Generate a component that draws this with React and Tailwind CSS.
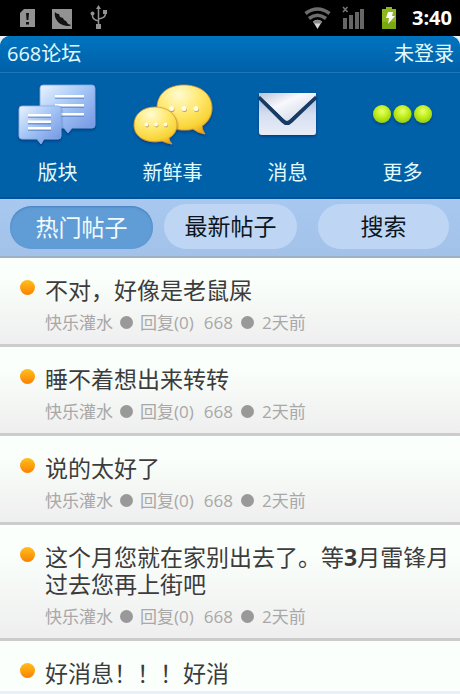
import React from "react";

const posts = [
  { title: "不对，好像是老鼠屎", board: "快乐灌水", replies: 0, author: "668", age: "2天前" },
  { title: "睡不着想出来转转", board: "快乐灌水", replies: 0, author: "668", age: "2天前" },
  { title: "说的太好了", board: "快乐灌水", replies: 0, author: "668", age: "2天前" },
  {
    title: <>这个月您就在家别出去了。等<b>3</b>月雷锋月过去您再上街吧</>,
    board: "快乐灌水",
    replies: 0,
    author: "668",
    age: "2天前",
  },
  { title: "好消息！！！好消" },
];

function StatusBar() {
  return (
    <div className="flex h-9 shrink-0 items-center bg-black pr-2 pl-5">
      <svg width="92" height="36" viewBox="0 0 92 36" fill="#929292" aria-hidden="true">
        <path d="M0 13 4 9H15V27H0Z" />
        <path d="M6 13h3l-.6 7H6.6zM6 22h3v2.500H6z" fill="#111" />
        <path d="M32 9H52V29H32Z" />
        <path d="M35 12c1 1 2 2 4 2l1 3 3 1 1 2 2 1 2 3 3 1c-1 2-8 1-12-2-3-3-5-7-4-11z" fill="#111" />
        <g stroke="#929292" strokeWidth="1.500" fill="none">
          <path d="M78.500 8v17M78.500 21c-4-1-6-2-6-5v-2M78.500 19c5-1 7-2 7-6" />
        </g>
        <path d="M78.500 5l2.500 4h-5zM76 24h5v5h-5zM83 10h4v4h-4z" />
        <circle cx="72.500" cy="13.500" r="2" />
      </svg>
      <svg className="ml-auto" width="98" height="36" viewBox="0 0 98 36" aria-hidden="true">
        <g fill="none" stroke="#6d6d6d" strokeWidth="3.500">
          <path d="M3.500 13.500Q15.500 4.500 27.500 13.500" />
          <path d="M7 18.500Q15.500 12 24 18.500" />
        </g>
        <path d="M11 21.500Q15.500 18 20 21.500L15.500 29Z" fill="#d8d8d8" />
        <path d="M11 21.500Q15.500 18 20 21.500L19 23.500H12Z" fill="#888" />
        <path d="M41 18h4v11h-4zM47 15h4v14h-4zM53 12h4v17h-4zM58 9h4v20h-4z" fill="#666" />
        <path d="M41 7l4.500 5M45.500 7l-4.500 5" stroke="#777" strokeWidth="1.500" />
        <path d="M84 7h6v2h4v20H80V9h4z" fill="#8db81d" />
        <path d="M80 22h14v7H80z" fill="#7aa80f" />
        <path d="M86 12h5l-1 4h3l-7 8 1-6h-3z" fill="#fff" />
      </svg>
      <time className="w-[52px] text-right text-[20px] leading-9 font-bold text-white">3:40</time>
    </div>
  );
}

function Lines({ x, y, w, gap }) {
  return [0, 1, 2].map((i) => (
    <g key={i}>
      <rect x={x} y={y + i * gap + 1} width={w} height="3" fill="#4f79bd" opacity=".6" />
      <rect x={x} y={y + i * gap} width={w} height="2.500" fill="#fff" />
    </g>
  ));
}

function BoardsIcon() {
  return (
    <svg width="86" height="66" viewBox="0 0 86 66" aria-hidden="true">
      <defs>
        <linearGradient id="board" x1="0" y1="0" x2="1" y2="1">
          <stop offset="0" stopColor="#ebf4ff" />
          <stop offset=".45" stopColor="#a5c6f5" />
          <stop offset="1" stopColor="#6f92e2" />
        </linearGradient>
        <filter id="soft" x="-20%" y="-20%" width="140%" height="150%">
          <feDropShadow dx="0" dy="1.500" stdDeviation="1" floodColor="#002a68" floodOpacity=".65" />
        </filter>
      </defs>
      <g filter="url(#soft)">
        <path d="M28 4H77Q80 4 80 7V44Q80 47 77 47H57L53 52 49 47H28Q25 47 25 44V7Q25 4 28 4Z" fill="url(#board)" stroke="#7da5e6" strokeWidth=".8" />
        <Lines x={40} y={14} w={29} gap={9} />
      </g>
      <g filter="url(#soft)">
        <path d="M7 25H43Q46 25 46 28V55Q46 58 43 58H29L26 63 22 58H7Q4 58 4 55V28Q4 25 7 25Z" fill="url(#board)" stroke="#8aaeea" strokeWidth=".8" />
        <Lines x={13} y={33} w={23} gap={6.5} />
      </g>
    </svg>
  );
}

function NewsIcon() {
  return (
    <svg width="86" height="66" viewBox="0 0 86 66" aria-hidden="true">
      <defs>
        <radialGradient id="bubble" cx=".4" cy=".2" r=".85">
          <stop offset="0" stopColor="#fffbd0" />
          <stop offset=".5" stopColor="#ffe667" />
          <stop offset=".8" stopColor="#f9d437" />
          <stop offset="1" stopColor="#eda71b" />
        </radialGradient>
      </defs>
      <g filter="url(#soft)">
        <path d="M54 4C70 4 82 13 82 27C82 35 78 41 72 45Q72 49 75 53Q68 52 63 48C60 49 57 49 54 49C38 49 27 40 27 27C27 13 38 4 54 4Z" fill="url(#bubble)" stroke="#d99925" strokeWidth=".8" />
        <g fill="#c9a04a"><circle cx="42" cy="28.500" r="2.500" /><circle cx="54.500" cy="28.500" r="2.500" /><circle cx="66.500" cy="28.500" r="2.500" /></g>
        <g fill="#fffdec"><circle cx="41.500" cy="27.500" r="2.500" /><circle cx="54" cy="27.500" r="2.500" /><circle cx="66" cy="27.500" r="2.500" /></g>
      </g>
      <g filter="url(#soft)">
        <path d="M25 26C37 26 47 33 47 44C47 50 43 55 39 57Q39 60 42 63Q36 62 32 60C18 63 4 57 4 44C4 33 13 26 25 26Z" fill="url(#bubble)" stroke="#d99925" strokeWidth=".8" />
        <g fill="#c9a04a"><circle cx="17" cy="44.500" r="2" /><circle cx="26.500" cy="44.500" r="2" /><circle cx="36" cy="44.500" r="2" /></g>
        <g fill="#fffdec"><circle cx="16.500" cy="43.500" r="2" /><circle cx="26" cy="43.500" r="2" /><circle cx="35.500" cy="43.500" r="2" /></g>
      </g>
    </svg>
  );
}

function MailIcon() {
  return (
    <svg width="86" height="66" viewBox="0 0 86 66" aria-hidden="true">
      <defs>
        <linearGradient id="mail" x1="0" y1="0" x2="0" y2="1">
          <stop offset="0" stopColor="#9fb3d3" />
          <stop offset=".5" stopColor="#d5def0" />
          <stop offset="1" stopColor="#e9edf6" />
        </linearGradient>
        <linearGradient id="flap" x1="0" y1="0" x2="1" y2="1">
          <stop offset="0" stopColor="#b9c3d8" />
          <stop offset=".4" stopColor="#f8f8fd" />
          <stop offset="1" stopColor="#c9d1e2" />
        </linearGradient>
      </defs>
      <g filter="url(#soft)">
        <path d="M14 12H71V51Q71 54 68 54H17Q14 54 14 51Z" fill="url(#mail)" />
      </g>
      <path d="M14 16L38 40Q42 44 46 40L71 16" fill="none" stroke="#173b64" strokeWidth="4" />
      <path d="M14 12H71V14L46 37Q42 41 38 37L14 14Z" fill="url(#flap)" />
    </svg>
  );
}

function MoreIcon() {
  return (
    <svg width="86" height="66" viewBox="0 0 86 66" aria-hidden="true">
      <defs>
        <radialGradient id="lime" cx=".5" cy=".35" r=".65">
          <stop offset="0" stopColor="#e9ff78" />
          <stop offset=".5" stopColor="#c2ef1c" />
          <stop offset="1" stopColor="#93cf0d" />
        </radialGradient>
      </defs>
      <g fill="url(#lime)" filter="url(#soft)">
        <circle cx="22" cy="33" r="9" /><circle cx="42.500" cy="33" r="9" /><circle cx="63" cy="33" r="9" />
      </g>
    </svg>
  );
}

const menu = [
  { label: "版块", Icon: BoardsIcon },
  { label: "新鲜事", Icon: NewsIcon },
  { label: "消息", Icon: MailIcon },
  { label: "更多", Icon: MoreIcon },
];

function Post({ title, board, replies, author, age }) {
  return (
    <li className="flex shrink-0 border-b-3 border-[#cbcccb] bg-linear-to-b from-[#fafffb] from-25% to-[#eeeeee] pt-[19px] pr-2 pb-[11px] pl-5 last:grow last:border-b-0 last:bg-[#fafffb] last:bg-none last:pb-0">
      <span className="mt-[3px] mr-[10px] size-[15px] shrink-0 rounded-full bg-linear-to-b from-[#ffc01c] to-[#f98000]" />
      <div className="min-w-0">
        <h2 className="text-[23px] leading-[27px] text-[#3c3c3c]">{title}</h2>
        {board && (
          <p className="mt-2 flex items-center text-[17px] leading-[21px] text-[#a8a8a8]">
            {board}
            <i className="mx-[7px] size-[13px] rounded-full bg-[#999]" />
            回复({replies})
            <span className="ml-[10px]">{author}</span>
            <i className="mx-2 size-[13px] rounded-full bg-[#999]" />
            {age}
          </p>
        )}
      </div>
    </li>
  );
}

export default function App() {
  return (
    <div className="flex h-screen flex-col overflow-hidden bg-[#e8f0f8] font-['Open_Sans','Noto_Sans_CJK_SC',sans-serif]">
      <StatusBar />
      <header className="shrink-0 overflow-hidden rounded-t-[10px] border-b-2 border-[#00529a] bg-[#0060a8] text-[#e2fbff]">
        <div className="flex h-[37px] items-center justify-between border-b border-[#1b78bb] bg-linear-to-b from-[#0074bf] to-[#0060a8] pr-[6px] pl-[7px]">
          <h1 className="text-[20px] leading-9">668论坛</h1>
          <a href="#login" className="text-[20px] leading-9">未登录</a>
        </div>
        <nav className="grid h-[124px] grid-cols-4 pt-2">
          {menu.map(({ label, Icon }) => (
            <a key={label} href="#menu" className="flex flex-col items-center">
              <Icon />
              <span className="mt-[13px] text-[20px] leading-[26px]">{label}</span>
            </a>
          ))}
        </nav>
      </header>
      <div className="flex h-[59px] shrink-0 items-start border-b-2 border-[#9fb1c4] bg-linear-to-b from-[#a9c8f0] to-[#a2c2ea] pt-[5px] pr-[11px] pl-[10px] text-[23px] leading-[45px] text-[#0d1420]">
        <button className="mt-[2px] h-[43px] flex-[143] rounded-full bg-[#609cd6] leading-[43px] text-[#f0fbff] inset-shadow-[0_1px_2px_#4682bd]">热门帖子</button>
        <button className="ml-[11px] h-[45px] flex-[133] rounded-full bg-[#bed6f4]">最新帖子</button>
        <button className="ml-[21px] h-[45px] flex-[131] rounded-full bg-[#bed6f4]">搜索</button>
      </div>
      <ul className="mb-[3px] flex min-h-0 flex-1 flex-col overflow-hidden">
        {posts.map((post, i) => (
          <Post key={i} {...post} />
        ))}
      </ul>
    </div>
  );
}
